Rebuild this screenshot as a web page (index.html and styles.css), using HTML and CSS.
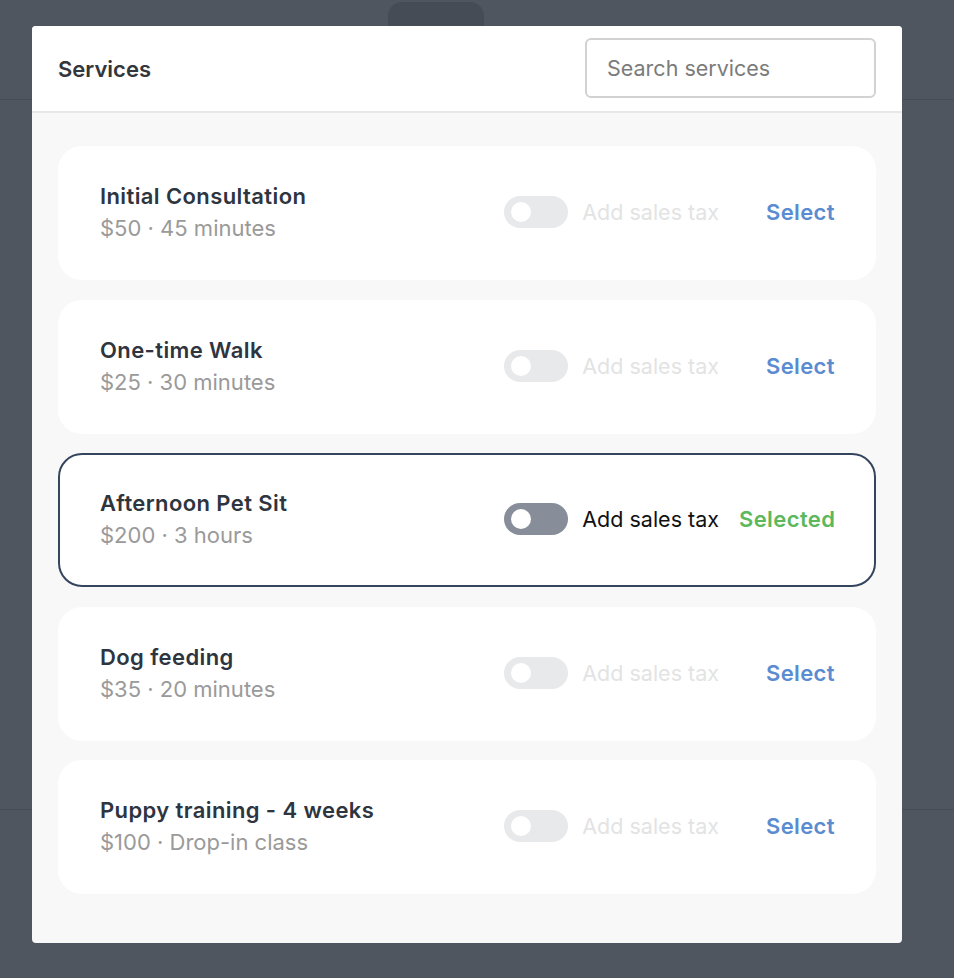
FILE: index.html
```html
<!DOCTYPE html>
<html>
<head>
  <meta charset="UTF-8">
  <title>Services</title>
  <link rel="stylesheet" href="styles.css">
</head>
<body>
  <div class="backdrop">
    <div class="tab"></div>
    <div class="line top"></div>
    <div class="line bottom"></div>
  </div>

  <div class="modal">
    <header class="modal-head">
      <h1>Services</h1>
      <input type="text" class="search" placeholder="Search services">
    </header>

    <div class="modal-body">
      <div class="card">
        <div class="info">
          <div class="name">Initial Consultation</div>
          <div class="meta">$50 · 45 minutes</div>
        </div>
        <div class="tax"><span class="toggle"></span>Add sales tax</div>
        <div class="action">Select</div>
      </div>

      <div class="card">
        <div class="info">
          <div class="name">One-time Walk</div>
          <div class="meta">$25 · 30 minutes</div>
        </div>
        <div class="tax"><span class="toggle"></span>Add sales tax</div>
        <div class="action">Select</div>
      </div>

      <div class="card selected">
        <div class="info">
          <div class="name">Afternoon Pet Sit</div>
          <div class="meta">$200 · 3 hours</div>
        </div>
        <div class="tax"><span class="toggle"></span>Add sales tax</div>
        <div class="action">Selected</div>
      </div>

      <div class="card">
        <div class="info">
          <div class="name">Dog feeding</div>
          <div class="meta">$35 · 20 minutes</div>
        </div>
        <div class="tax"><span class="toggle"></span>Add sales tax</div>
        <div class="action">Select</div>
      </div>

      <div class="card">
        <div class="info">
          <div class="name">Puppy training - 4 weeks</div>
          <div class="meta">$100 · Drop-in class</div>
        </div>
        <div class="tax"><span class="toggle"></span>Add sales tax</div>
        <div class="action">Select</div>
      </div>
    </div>
  </div>
</body>
</html>
```

FILE: styles.css
```css
body {
  margin: 0;
  padding: 26px 0 0 32px;
  height: 100vh;
  box-sizing: border-box;
  background: #4f5660;
  font-family: Inter, "Noto Sans", sans-serif;
}

/* dimmed page behind the modal */
.backdrop {
  position: fixed;
  inset: 0;
}

.tab {
  position: absolute;
  left: 388px;
  top: 2px;
  width: 96px;
  height: 60px;
  border-radius: 14px;
  background: #464c55;
}

.line {
  position: absolute;
  left: 0;
  right: 0;
  height: 1px;
  background: #474d56;
}

.line.top {
  top: 99px;
}

.line.bottom {
  top: 809px;
}

.modal {
  position: relative;
  width: 870px;
  background: #f8f8f8;
  border-radius: 4px;
  overflow: hidden;
}

.modal-head {
  display: flex;
  align-items: center;
  justify-content: space-between;
  height: 85px;
  padding: 0 26px;
  background: #ffffff;
  border-bottom: 2px solid #e8e8e8;
}

.modal-head h1 {
  margin: 0;
  font-size: 22px;
  font-weight: 600;
  color: #33363b;
}

.search {
  width: 291px;
  height: 60px;
  box-sizing: border-box;
  margin-bottom: 2px;
  padding: 0 20px;
  border: 2px solid #d2d2d2;
  border-radius: 6px;
  font-family: inherit;
  font-size: 21.5px;
  color: #333;
}

.search::placeholder {
  color: #7b7b7b;
}

.modal-body {
  display: flex;
  flex-direction: column;
  gap: 19.5px;
  padding: 33px 26px 49px;
}

.card {
  display: flex;
  align-items: center;
  height: 134px;
  box-sizing: border-box;
  padding: 0 39px 2px 40px;
  background: #ffffff;
  border: 2px solid #ffffff;
  border-radius: 24px;
}

.info {
  flex: 1;
}

.name {
  font-size: 22px;
  line-height: 32px;
  font-weight: 600;
  letter-spacing: 0.4px;
  color: #2e353f;
}

.meta {
  font-size: 22px;
  line-height: 32px;
  color: #9a9a9a;
}

.tax {
  display: flex;
  align-items: center;
  gap: 14px;
  font-size: 21.5px;
  color: #e3e3e3;
}

.toggle {
  position: relative;
  width: 64px;
  height: 32px;
  border-radius: 16px;
  background: #e8e9eb;
}

.toggle::after {
  content: "";
  position: absolute;
  left: 7px;
  top: 6px;
  width: 20px;
  height: 20px;
  border-radius: 50%;
  background: #ffffff;
}

.action {
  width: 96px;
  margin-left: 20px;
  text-align: right;
  font-size: 22px;
  font-weight: 600;
  letter-spacing: 0.4px;
  color: #5b8bd0;
}

.card.selected {
  border-color: #34455d;
}

.selected .tax {
  color: #111111;
}

.selected .toggle {
  background: #878e99;
}

.selected .action {
  color: #5cb85c;
}
```
